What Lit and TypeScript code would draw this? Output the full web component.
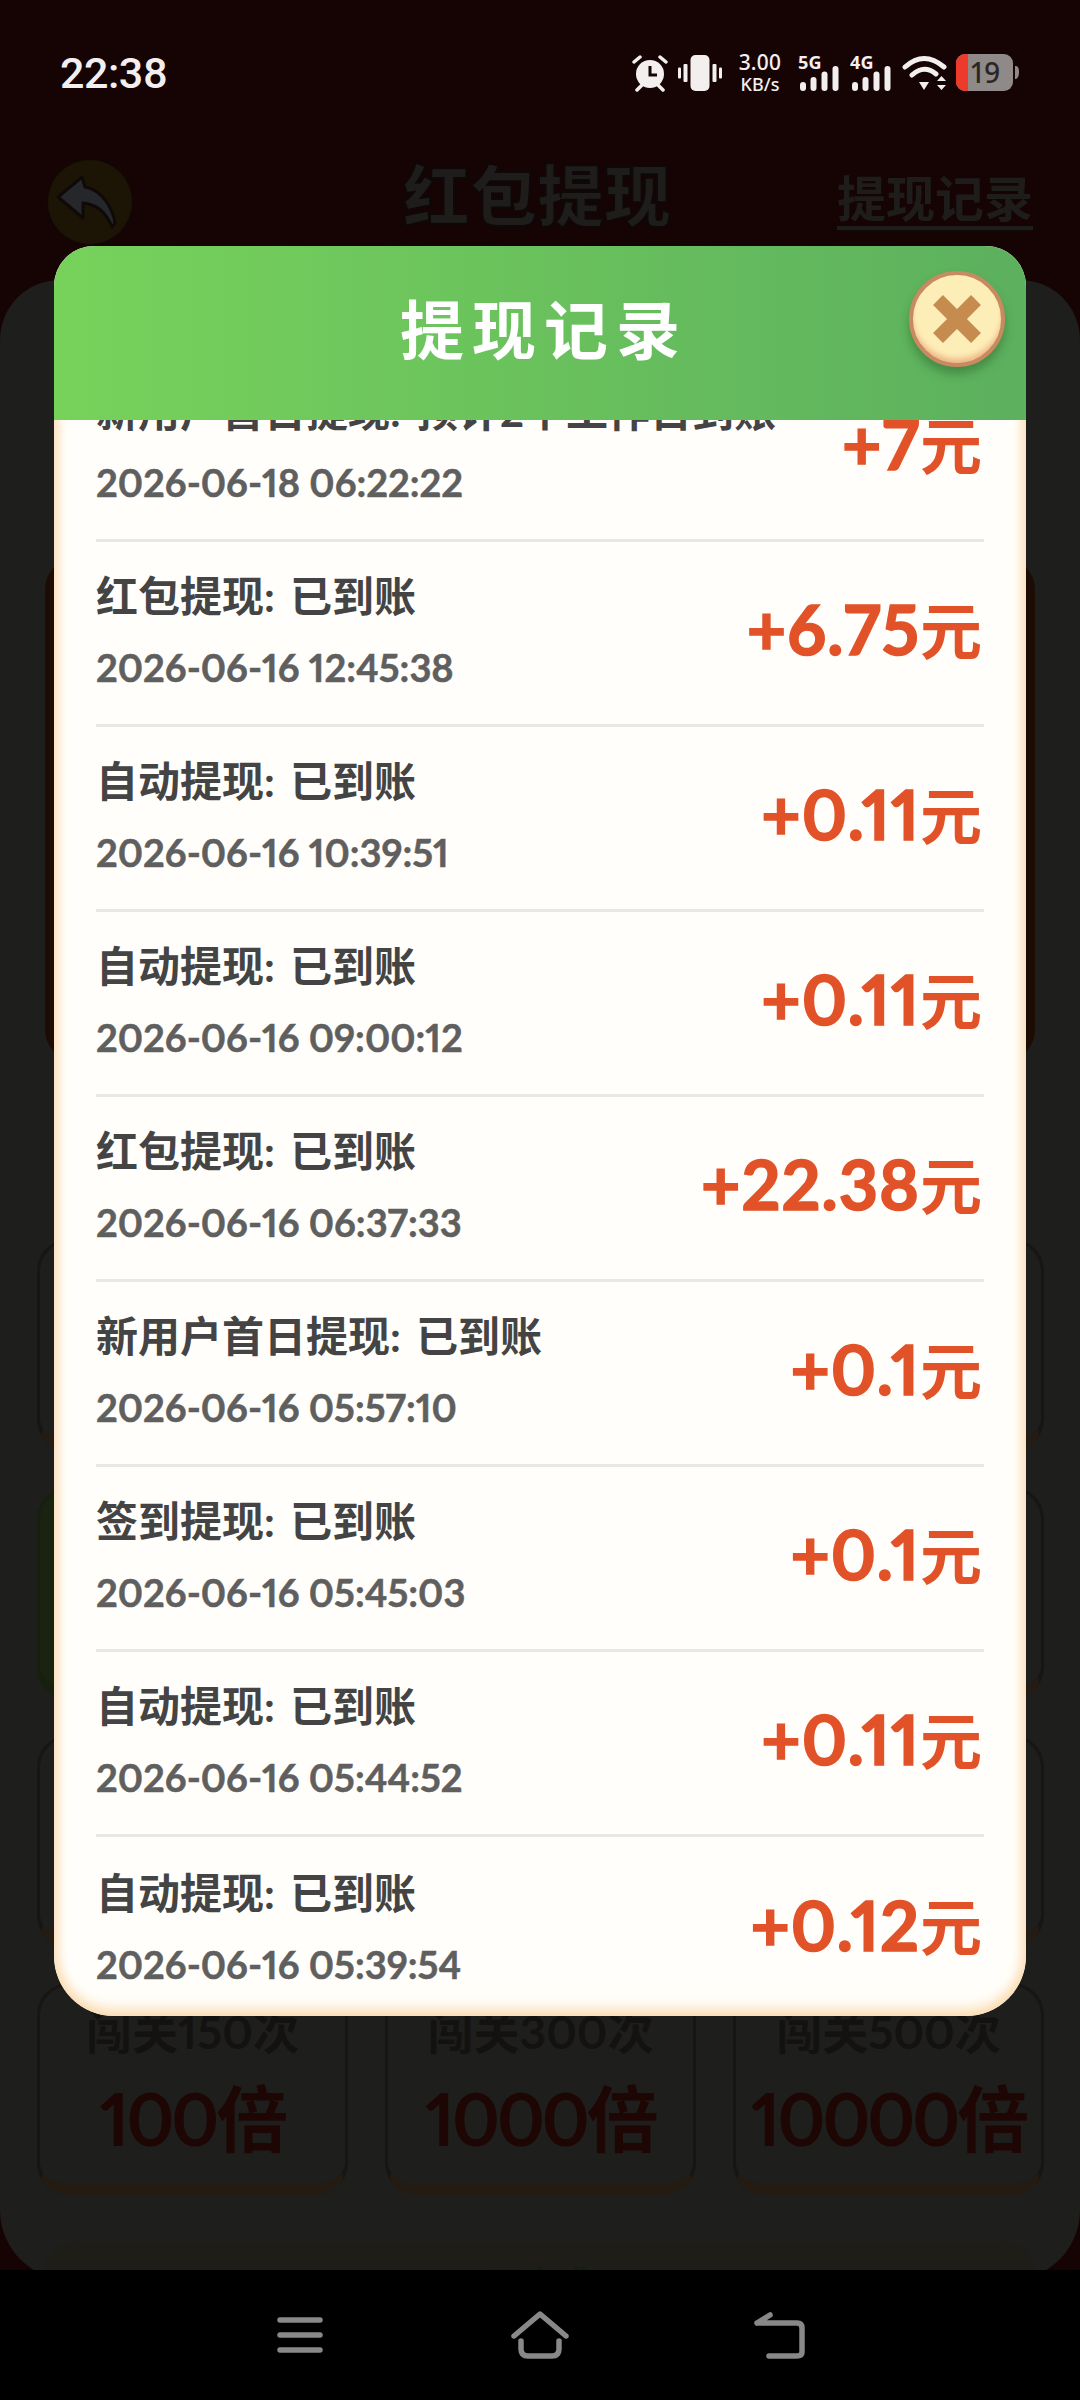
import { LitElement, html, css, svg } from "lit";
import { customElement } from "lit/decorators.js";

const records = [
  { title: "新用户首日提现: 预计2个工作日到账", time: "2026-06-18 06:22:22", amount: "+7" },
  { title: "红包提现: 已到账", time: "2026-06-16 12:45:38", amount: "+6.75" },
  { title: "自动提现: 已到账", time: "2026-06-16 10:39:51", amount: "+0.11" },
  { title: "自动提现: 已到账", time: "2026-06-16 09:00:12", amount: "+0.11" },
  { title: "红包提现: 已到账", time: "2026-06-16 06:37:33", amount: "+22.38" },
  { title: "新用户首日提现: 已到账", time: "2026-06-16 05:57:10", amount: "+0.1" },
  { title: "签到提现: 已到账", time: "2026-06-16 05:45:03", amount: "+0.1" },
  { title: "自动提现: 已到账", time: "2026-06-16 05:44:52", amount: "+0.11" },
  { title: "自动提现: 已到账", time: "2026-06-16 05:39:54", amount: "+0.12" },
];

// cards behind the dialog, only the last row can actually be read
const cards = [
  {}, {}, {},
  { green: true }, {}, {},
  {}, {}, {},
  { label: "闯关150次", value: "100倍" },
  { label: "闯关300次", value: "1000倍" },
  { label: "闯关500次", value: "10000倍" },
] as { label?: string; value?: string; green?: boolean }[];

const signal = (label: string) => svg`
  <text x="0" y="15" class="net">${label}</text>
  <rect x="2" y="28" width="6" height="9" rx="3" />
  <rect x="12.500" y="23" width="6" height="14" rx="3" />
  <rect x="23.500" y="17.500" width="6" height="19.500" rx="3" />
  <rect x="34.500" y="12" width="6" height="25" rx="3" />
`;

@customElement("app-root")
export class AppRoot extends LitElement {
  static styles = css`
    :host {
      display: block;
      width: 1080px;
      height: 2400px;
      position: relative;
      overflow: hidden;
      background: #000;
      font-family: "Noto Sans CJK SC", sans-serif;
      font-variant-numeric: proportional-nums;
    }

    .page {
      height: 2400px;
      display: flex;
      flex-direction: column;
    }

    .main {
      height: 2270px;
      overflow: hidden;
      background: #160404;
    }

    .status {
      height: 146px;
      box-sizing: border-box;
      padding: 0 60px;
      display: flex;
      align-items: center;
      justify-content: space-between;
      color: #f4efef;
    }

    .clock {
      font-family: Roboto, sans-serif;
      font-weight: 500;
      font-size: 43px;
      letter-spacing: -0.5px;
    }

    .status-icons {
      display: flex;
      align-items: center;
    }

    .status-icons svg {
      display: block;
      fill: #f4efef;
    }

    .status-icons .net {
      font-family: "Noto Sans", sans-serif;
      font-size: 18px;
      font-weight: 700;
    }

    .speed {
      width: 46px;
      margin: 0 15px;
      display: flex;
      flex-direction: column;
      align-items: center;
      font-family: "Noto Sans", sans-serif;
      font-weight: 500;
      gap: 1px;
    }

    .speed b {
      font-size: 21px;
      font-weight: 500;
      line-height: 21px;
    }

    .speed span {
      font-size: 18px;
      line-height: 21px;
    }

    .topbar {
      height: 134px;
      box-sizing: border-box;
      padding: 14px 47px 0 48px;
      display: flex;
      align-items: flex-start;
      justify-content: space-between;
    }

    .back {
      width: 84px;
      height: 84px;
      border-radius: 50%;
      background: #1c1505;
      box-shadow: 0 0 0 1px #120a04;
    }

    .back svg {
      display: block;
    }

    .topbar h1 {
      margin: -5px 0 0 105px;
      font-size: 67px;
      line-height: 74px;
      font-weight: 900;
      color: #1f1d1c;
      -webkit-text-stroke: 2px #0f0808;
    }

    .link {
      margin-top: 6px;
      font-size: 49px;
      line-height: 60px;
      font-weight: 700;
      color: #1f1d1c;
      border-bottom: 4px solid #1f1d1c;
      box-shadow: 0 2px 0 #0f0808;
    }

    .panel {
      height: 2000px;
      box-sizing: border-box;
      padding: 279px 45px 0;
      border-radius: 60px 60px 70px 70px;
      background: #1e1e1c;
    }

    .banner {
      height: 501px;
      border-radius: 30px;
      background: #1d0c03;
    }

    .grid {
      margin: 179px -8px 0;
      display: grid;
      grid-template-columns: repeat(3, 311px);
      grid-auto-rows: 212px;
      column-gap: 37px;
      row-gap: 36px;
    }

    .card {
      box-sizing: border-box;
      padding-top: 19px;
      border: 3px solid #181614;
      border-bottom-width: 11px;
      border-bottom-color: #241b13;
      border-radius: 32px;
      display: flex;
      flex-direction: column;
      align-items: center;
    }

    .card.green {
      background: #192310;
      border-color: #17200f;
    }

    .card span {
      font-family: Lato, "Noto Sans CJK SC", sans-serif;
      font-size: 46px;
      line-height: 54px;
      font-weight: 700;
      color: #141210;
    }

    .card b {
      margin-top: 16px;
      font-family: Lato, "Noto Sans CJK SC", sans-serif;
      font-size: 72px;
      line-height: 86px;
      font-weight: 700;
      letter-spacing: -3px;
      color: #1d0603;
    }

    .done {
      margin-top: 47px;
      height: 90px;
      padding-top: 20px;
      border-radius: 30px;
      background: #1f1d17;
      text-align: center;
      font-size: 34px;
      line-height: 40px;
      font-weight: 700;
      color: #12200c;
    }

    .nav {
      height: 130px;
      background: #000;
      display: grid;
      grid-template-columns: repeat(3, 240px);
      justify-content: center;
      place-items: center;
    }

    .nav svg {
      display: block;
      fill: none;
      stroke: #888;
      stroke-width: 5.5;
      stroke-linecap: round;
      stroke-linejoin: round;
    }

    .dialog {
      position: absolute;
      left: 54px;
      top: 246px;
      width: 972px;
      height: 1770px;
      display: flex;
      flex-direction: column;
      border-radius: 40px 40px 60px 60px;
      overflow: hidden;
      background: #fffefa;
    }

    .dialog-head {
      position: relative;
      z-index: 1;
      height: 174px;
      flex: none;
      display: flex;
      align-items: center;
      justify-content: center;
      background: linear-gradient(90deg, #77d25b, #5cb05e);
    }

    .dialog-head h2 {
      margin: 0 0 14px 8px;
      font-size: 64px;
      line-height: 80px;
      font-weight: 700;
      letter-spacing: 8px;
      color: #fff;
    }

    .close {
      position: absolute;
      top: 25px;
      right: 21px;
      width: 96px;
      height: 96px;
      box-sizing: border-box;
      border: 4px solid #c88a60;
      border-radius: 50%;
      background: #fdeeb8;
      box-shadow: inset 0 -6px 6px -2px #eeb183, 0 7px 10px rgba(40, 90, 40, 0.45);
      display: flex;
      align-items: center;
      justify-content: center;
    }

    .close svg {
      display: block;
    }

    .list {
      flex: 1;
      min-height: 0;
      overflow: hidden;
      padding: 0 42px;
    }

    .rows {
      margin-top: -63px;
    }

    .row {
      height: 185px;
      box-sizing: border-box;
      border-bottom: 3px solid #e8e8e6;
      display: flex;
      align-items: center;
      justify-content: space-between;
    }

    .row:last-child {
      border-bottom: none;
    }

    .row-text {
      padding-bottom: 8px;
    }

    .row-title {
      font-family: Lato, "Noto Sans CJK SC", sans-serif;
      font-size: 42px;
      line-height: 50px;
      font-weight: 700;
      word-spacing: 5px;
      color: #444;
    }

    .row-time {
      margin-top: 26px;
      font-family: Lato, sans-serif;
      font-size: 38px;
      line-height: 40px;
      font-weight: 700;
      color: #5f5f5f;
      -webkit-text-stroke: 0.5px #5f5f5f;
    }

    .row-amount {
      margin-bottom: 10px;
      margin-right: 2px;
      font-family: Lato, sans-serif;
      font-size: 68px;
      line-height: 80px;
      font-weight: 700;
      letter-spacing: 1px;
      color: #e25228;
      -webkit-text-stroke: 1.5px #e25228;
    }

    .row-amount span {
      font-family: "Noto Sans CJK SC", sans-serif;
      font-size: 62px;
      font-weight: 700;
      letter-spacing: 0;
      -webkit-text-stroke: 0;
    }

    .edge {
      position: absolute;
      inset: 0;
      border-radius: 40px 40px 60px 60px;
      box-shadow: inset 0 -8px 14px -2px #fbd9ac, inset 10px 0 12px -6px #fde3c6, inset -10px 0 12px -6px #fde3c6;
      pointer-events: none;
    }
  `;

  private renderStatusIcons() {
    return html`<div class="status-icons">
      <svg width="36" height="38" viewBox="0 0 36 38">
        <circle cx="18" cy="20" r="14" />
        <path d="M18 12v9h7" fill="none" stroke="#160404" stroke-width="3" />
        <path d="M2 8l6-5M34 8l-6-5M5 36l5-5M31 36l-5-5" fill="none" stroke="#f4efef" stroke-width="3.500" stroke-linecap="round" />
      </svg>
      <svg style="margin-left:10px" width="44" height="36" viewBox="0 0 44 36">
        <rect x="12.500" y="0" width="19" height="36" rx="5" />
        <rect x="5.500" y="9" width="4" height="18" rx="1" />
        <rect x="34.500" y="9" width="4" height="18" rx="1" />
        <rect x="0" y="12.500" width="3" height="11" rx="1" />
        <rect x="41" y="12.500" width="3" height="11" rx="1" />
      </svg>
      <div class="speed"><b>3.00</b><span>KB/s</span></div>
      <svg width="42" height="48" viewBox="0 -5 42 48">${signal("5G")}</svg>
      <svg style="margin-left:10px" width="42" height="48" viewBox="0 -5 42 48">${signal("4G")}</svg>
      <svg style="margin-left:10px" width="45" height="36" viewBox="0 0 45 36">
        <path d="M3 12Q22-5 42 12M10 20Q22 9 34 19" fill="none" stroke="#f4efef" stroke-width="5" stroke-linecap="round" />
        <path d="M17 27h10l-5 8zM35 26h9l-4.500-5zM35 30h9l-4.500 5z" />
      </svg>
      <svg style="margin-left:9px" width="64" height="46" viewBox="0 -4 64 46">
        <rect x="0" y="0" width="57" height="37" rx="9" fill="#8f8a88" />
        <path d="M9 0h3v37H9a9 9 0 0 1-9-9V9a9 9 0 0 1 9-9z" fill="#ee3a2a" />
        <path d="M59 12c3 0 4 2 4 6s-1 7-4 7z" fill="#8f8a88" />
        <text x="15" y="29" font-family="Noto Sans, sans-serif" font-size="28" font-weight="500" fill="#2b2626">19</text>
      </svg>
    </div>`;
  }

  render() {
    return html`
      <div class="page">
        <div class="main">
          <div class="status">
            <div class="clock">22:38</div>
            ${this.renderStatusIcons()}
          </div>
          <div class="topbar">
            <div class="back">
              <svg width="84" height="84" viewBox="0 0 84 84">
                <path d="M10 37L34 17L37 27C55 30 65 50 67 63L64 67C58 52 48 44 35 43V58Z" fill="#25272b" stroke="#0f0a08" stroke-width="3" stroke-linejoin="round" />
              </svg>
            </div>
            <h1>红包提现</h1>
            <div class="link">提现记录</div>
          </div>
          <div class="panel">
            <div class="banner"></div>
            <div class="grid">
              ${cards.map(
                (c) => html`<div class="card ${c.green ? "green" : ""}">
                  ${c.label ? html`<span>${c.label}</span><b>${c.value}</b>` : ""}
                </div>`
              )}
            </div>
            <div class="done">已完成</div>
          </div>
        </div>
        <div class="nav">
          <svg width="46" height="40" viewBox="0 0 46 40">
            <path d="M3 5h40M3 20h40M3 35h40" />
          </svg>
          <svg width="60" height="48" viewBox="0 0 60 48">
            <path d="M4 25L30 3L56 25M11 30v8q0 7 7 7h24q7 0 7-7v-8" />
          </svg>
          <svg width="52" height="48" viewBox="0 0 52 48">
            <path d="M3 12h40q5 0 5 5v24q0 4-5 4H15M3 12L16 4" />
          </svg>
        </div>
      </div>

      <div class="dialog">
        <div class="dialog-head">
          <h2>提现记录</h2>
          <div class="close">
            <svg width="48" height="48" viewBox="0 0 48 48">
              <path d="M5 5L43 43M43 5L5 43" stroke="#c58b4f" stroke-width="14" />
            </svg>
          </div>
        </div>
        <div class="list">
          <div class="rows">
            ${records.map(
              (r) => html`<div class="row">
                <div class="row-text">
                  <div class="row-title">${r.title}</div>
                  <div class="row-time">${r.time}</div>
                </div>
                <div class="row-amount">${r.amount}<span>元</span></div>
              </div>`
            )}
          </div>
        </div>
        <div class="edge"></div>
      </div>
    `;
  }
}
